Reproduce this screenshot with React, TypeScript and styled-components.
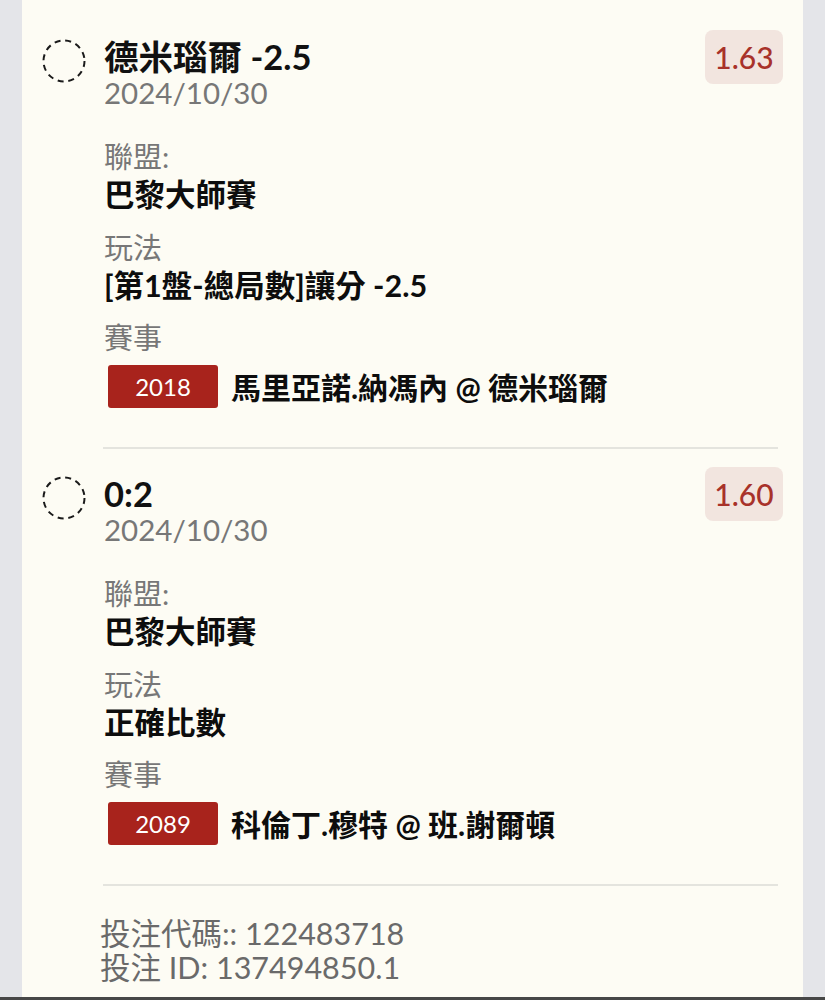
import React from 'react';
import styled, { createGlobalStyle } from 'styled-components';

const GlobalStyle = createGlobalStyle`
  html, body {
    margin: 0;
    padding: 0;
    background: #e4e5e9;
  }
  body {
    font-family: Lato, "Noto Sans CJK TC", sans-serif;
  }
`;

// styles
const Page = styled.div`
  display: flex;
  flex-direction: column;
  min-height: 1000px;
`;

const Card = styled.div`
  flex: 1;
  margin: 0 22px;
  padding: 12px 20px 11px;
  background: #fdfcf4;
`;

const Item = styled.div`
  display: flex;
  align-items: flex-start;
  padding: 18px 0 39px;
`;

const Check = styled.div`
  width: 44px;
  height: 44px;
  margin-top: 9px;
  margin-right: 18px;
  flex-shrink: 0;
`;

const Content = styled.div`
  flex: 1;
  display: flex;
  flex-direction: column;
  padding-top: 9px;
`;

const Title = styled.div`
  font-size: 34.5px;
  line-height: 36px;
  font-weight: 700;
  color: #111;
`;

const DateText = styled.div`
  font-size: 29.5px;
  line-height: 36px;
  color: #777;
  margin-bottom: 28px;
`;

const Label = styled.div<{ $gap?: number }>`
  font-size: 29px;
  line-height: 36px;
  color: #777;
  margin-top: ${(p) => p.$gap ?? 0}px;
`;

const Value = styled.div`
  font-size: 30.5px;
  line-height: 38px;
  font-weight: 700;
  color: #0d0d0d;
`;

const MatchRow = styled.div`
  display: flex;
  align-items: center;
  gap: 13px;
  margin-top: 8px;
  padding-left: 4px;
`;

const Code = styled.div`
  width: 110px;
  height: 43px;
  border-radius: 3px;
  background: #a8231c;
  color: #fff;
  font-size: 24px;
  display: flex;
  align-items: center;
  justify-content: center;
`;

const Teams = styled.div`
  font-size: 30px;
  font-weight: 700;
  color: #0d0d0d;
`;

const Odds = styled.div`
  width: 78px;
  height: 54px;
  border-radius: 8px;
  background: #f2e5df;
  color: #a8322a;
  font-size: 30px;
  font-weight: 500;
  display: flex;
  align-items: center;
  justify-content: center;
  flex-shrink: 0;
`;

const Divider = styled.div`
  height: 2px;
  background: #e4e4de;
  margin: 0 5px 0 61px;
`;

const Footer = styled.div`
  padding: 30px 0 0 58px;
  color: #6a6a6a;
  font-size: 30.5px;
  line-height: 34px;
`;

const BottomBar = styled.div`
  height: 3px;
  background: #474747;
`;

type Bet = {
  title: string;
  date: string;
  league: string;
  market: string;
  code: string;
  teams: string;
  odds: string;
};

const bets: Bet[] = [
  {
    title: '德米瑙爾 -2.5',
    date: '2024/10/30',
    league: '巴黎大師賽',
    market: '[第1盤-總局數]讓分 -2.5',
    code: '2018',
    teams: '馬里亞諾.納馮內 @ 德米瑙爾',
    odds: '1.63',
  },
  {
    title: '0:2',
    date: '2024/10/30',
    league: '巴黎大師賽',
    market: '正確比數',
    code: '2089',
    teams: '科倫丁.穆特 @ 班.謝爾頓',
    odds: '1.60',
  },
];

function DashedCircle() {
  return (
    <Check>
      <svg width="44" height="44" viewBox="0 0 44 44">
        <circle
          cx="22"
          cy="22"
          r="20.5"
          fill="none"
          stroke="#1a1a1a"
          strokeWidth="2"
          strokeDasharray="6 4.8"
        />
      </svg>
    </Check>
  );
}

function BetItem({ bet }: { bet: Bet }) {
  return (
    <Item>
      <DashedCircle />
      <Content>
        <Title>{bet.title}</Title>
        <DateText>{bet.date}</DateText>
        <Label>聯盟:</Label>
        <Value>{bet.league}</Value>
        <Label $gap={17}>玩法</Label>
        <Value>{bet.market}</Value>
        <Label $gap={16}>賽事</Label>
        <MatchRow>
          <Code>{bet.code}</Code>
          <Teams>{bet.teams}</Teams>
        </MatchRow>
      </Content>
      <Odds>{bet.odds}</Odds>
    </Item>
  );
}

export default function App() {
  return (
    <Page>
      <GlobalStyle />
      <Card>
        {bets.map((bet) => (
          <React.Fragment key={bet.code}>
            <BetItem bet={bet} />
            <Divider />
          </React.Fragment>
        ))}
        <Footer>
          <div>投注代碼:: 122483718</div>
          <div>投注 ID: 137494850.1</div>
        </Footer>
      </Card>
      <BottomBar />
    </Page>
  );
}
